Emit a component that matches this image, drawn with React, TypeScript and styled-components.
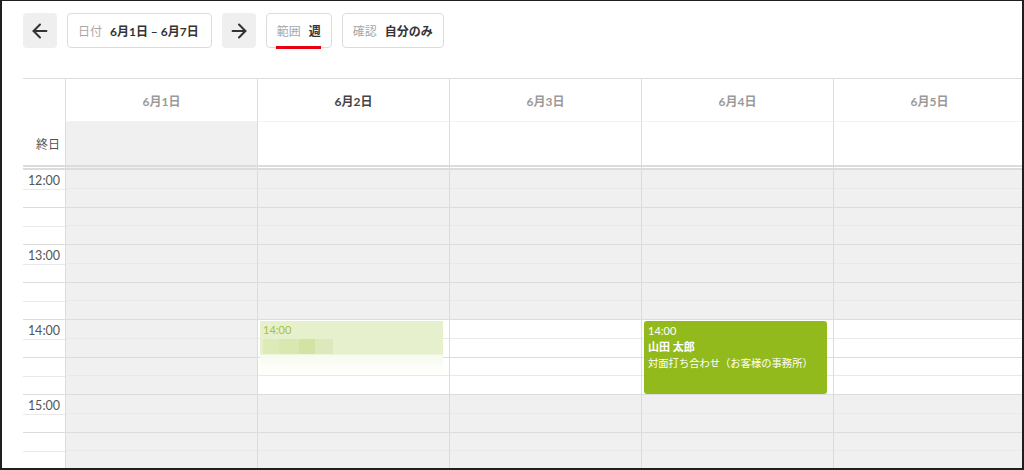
import React from 'react'
import styled, { createGlobalStyle } from 'styled-components'
import { ArrowLeft, ArrowRight } from 'lucide-react'

const GlobalStyle = createGlobalStyle`
  html, body {
    margin: 0;
    padding: 0;
    background: #fff;
  }
  body {
    font-family: "Lato", "Noto Sans CJK JP", sans-serif;
    color: #333;
  }
  * {
    box-sizing: border-box;
  }
`

const Frame = styled.div`
  width: 1024px;
  height: 470px;
  border: 2px solid #1f1f1f;
  border-top-width: 1px;
  background: #fff;
  overflow: hidden;
`

const Toolbar = styled.div`
  display: flex;
  gap: 10px;
  padding: 12px 0 0 21px;
`

const IconButton = styled.button`
  width: 34px;
  height: 35px;
  border: none;
  border-radius: 4px;
  background: #efefef;
  color: #333;
  display: flex;
  align-items: center;
  justify-content: center;
  padding: 0;
`

const FilterButton = styled.button<{ padRight?: number }>`
  height: 35px;
  border: 1px solid #dcdcdc;
  border-radius: 4px;
  background: #fff;
  padding: 0 ${({ padRight }) => padRight ?? 10}px 0 10px;
  display: flex;
  align-items: center;
  font-family: "Lato", "Noto Sans CJK JP", sans-serif;
  font-size: 12px;
`

const FilterInner = styled.span<{ underline?: boolean }>`
  position: relative;
  display: flex;
  align-items: center;
  gap: 8px;

  &::after {
    content: '';
    display: ${({ underline }) => (underline ? 'block' : 'none')};
    position: absolute;
    left: -1px;
    right: 0;
    bottom: -10px;
    height: 3px;
    background: #e60012;
  }
`

const FilterLabel = styled.span`
  color: #a8a8a8;
`

const FilterValue = styled.span`
  color: #333;
  font-weight: 700;
`

const Calendar = styled.div`
  margin: 30px 0 0 21px;
  display: grid;
  grid-template-columns: 42px repeat(5, 192px);
  width: max-content;
`

const HeadCell = styled.div<{ first?: boolean }>`
  height: 44px;
  border-top: 1px solid #dcdcdc;
  border-left: ${({ first }) => (first ? 'none' : '1px solid #dcdcdc')};
  border-bottom: ${({ first }) => (first ? 'none' : '1px solid #f2f2f2')};
  display: flex;
  align-items: center;
  justify-content: center;
`

const DayName = styled.span<{ active?: boolean }>`
  font-size: 12px;
  font-weight: 700;
  color: ${({ active }) => (active ? '#444' : '#9a9a9a')};
`

const AllDayCell = styled.div<{ first?: boolean; off?: boolean }>`
  height: 48px;
  background: ${({ off }) => (off ? '#f0f0f0' : '#fff')};
  border-left: ${({ first }) => (first ? 'none' : '1px solid #dcdcdc')};
  border-bottom: 5px double #dcdcdc;
  display: flex;
  align-items: center;
  justify-content: flex-end;
  padding-right: 5px;
  font-size: 12px;
  color: #555;
`

const SlotCell = styled.div<{ first?: boolean; off?: boolean }>`
  position: relative;
  height: 75px;
  display: flex;
  flex-direction: column;
  background: ${({ off }) => (off ? '#f0f0f0' : '#fff')};
  border-left: ${({ first }) => (first ? 'none' : '1px solid #dcdcdc')};
`

const Quarter = styled.div<{ major?: boolean }>`
  flex: 1;
  border-bottom: 1px solid ${({ major }) => (major ? '#dcdcdc' : '#e9e9e9')};
  display: flex;
  justify-content: flex-end;
  align-items: flex-start;
  padding: 3px 5px 0 0;
  font-size: 12.5px;
  color: #555;
  line-height: 16px;
`

const Event = styled.div`
  position: absolute;
  top: 1px;
  left: 2px;
  width: 183px;
  height: 73px;
  border-radius: 3px;
  background: #93ba1c;
  color: #fff;
  padding: 2px 4px;
  font-size: 11px;
  line-height: 16px;
`

const EventTitle = styled.div`
  font-weight: 700;
`

const EventNote = styled.div`
  font-size: 10.3px;
`

const BlurredEvent = styled.div`
  position: absolute;
  top: 1px;
  left: 2px;
  width: 183px;
  height: 54px;
  background: linear-gradient(
    to bottom,
    #e6f0cc 0,
    #e6f0cc 33px,
    #f7faee 34px,
    #fbfdf6 44px,
    rgba(255, 255, 255, 0) 54px
  );
  padding: 2px 3px;
  font-size: 11px;
  line-height: 14px;
  color: #a5c43c;
`

const Mosaic = styled.div`
  display: flex;
  margin-top: 2px;
  height: 15px;
`

const MosaicBlock = styled.span<{ w: number; tone: string }>`
  width: ${({ w }) => w}px;
  background: ${({ tone }) => tone};
`

const days = [
  { label: '6月1日', off: true },
  { label: '6月2日', active: true },
  { label: '6月3日' },
  { label: '6月4日' },
  { label: '6月5日' },
]

const hours = [12, 13, 14, 15]

const mosaic = [
  { w: 16, tone: '#dcebb8' },
  { w: 20, tone: '#d9e8b1' },
  { w: 16, tone: '#d2e3a3' },
  { w: 18, tone: '#dde9bd' },
]

const isOff = (hour: number, dayIndex: number) => dayIndex === 0 || hour !== 14

export default function App() {
  return (
    <>
      <GlobalStyle />
      <Frame>
        <Toolbar>
          <IconButton>
            <ArrowLeft size={22} strokeWidth={2.2} />
          </IconButton>
          <FilterButton padRight={12}>
            <FilterInner>
              <FilterLabel>日付</FilterLabel>
              <FilterValue>6月1日 – 6月7日</FilterValue>
            </FilterInner>
          </FilterButton>
          <IconButton>
            <ArrowRight size={22} strokeWidth={2.2} />
          </IconButton>
          <FilterButton>
            <FilterInner underline>
              <FilterLabel>範囲</FilterLabel>
              <FilterValue>週</FilterValue>
            </FilterInner>
          </FilterButton>
          <FilterButton>
            <FilterInner>
              <FilterLabel>確認</FilterLabel>
              <FilterValue>自分のみ</FilterValue>
            </FilterInner>
          </FilterButton>
        </Toolbar>

        <Calendar>
          <HeadCell first />
          {days.map((d) => (
            <HeadCell key={d.label}>
              <DayName active={d.active}>{d.label}</DayName>
            </HeadCell>
          ))}

          <AllDayCell first>終日</AllDayCell>
          {days.map((d) => (
            <AllDayCell key={d.label} off={d.off} />
          ))}

          {hours.map((h) => (
            <React.Fragment key={h}>
              <SlotCell first>
                <Quarter>{h}:00</Quarter>
                <Quarter major />
                <Quarter />
                <Quarter major />
              </SlotCell>
              {days.map((d, i) => (
                <SlotCell key={d.label} off={isOff(h, i)}>
                  <Quarter />
                  <Quarter major />
                  <Quarter />
                  <Quarter major />
                  {h === 14 && i === 1 && (
                    <BlurredEvent>
                      14:00
                      <Mosaic>
                        {mosaic.map((m, k) => (
                          <MosaicBlock key={k} w={m.w} tone={m.tone} />
                        ))}
                      </Mosaic>
                    </BlurredEvent>
                  )}
                  {h === 14 && i === 3 && (
                    <Event>
                      <div>14:00</div>
                      <EventTitle>山田 太郎</EventTitle>
                      <EventNote>対面打ち合わせ（お客様の事務所）</EventNote>
                    </Event>
                  )}
                </SlotCell>
              ))}
            </React.Fragment>
          ))}
        </Calendar>
      </Frame>
    </>
  )
}
